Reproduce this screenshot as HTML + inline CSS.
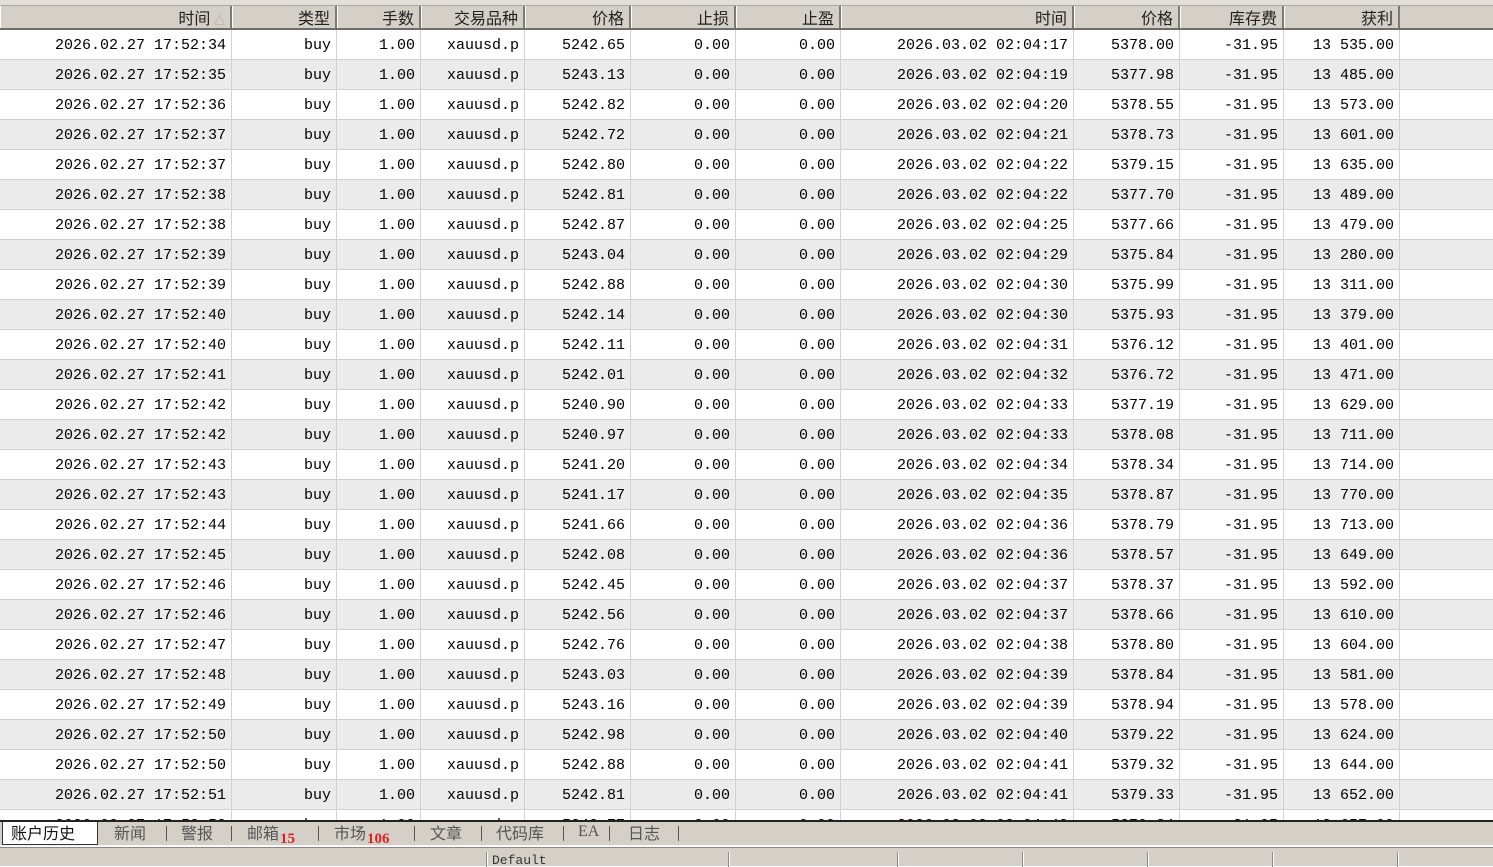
<!DOCTYPE html>
<html><head><meta charset="utf-8"><style>
*{margin:0;padding:0;box-sizing:border-box}
body{width:1493px;height:866px;overflow:hidden;background:#fff;font-family:"Liberation Mono","Noto Sans CJK SC",monospace;font-size:15px;color:#111;position:relative}
.top{position:absolute;left:0;top:0;width:1493px;height:6px;background:#e2dfd8;border-bottom:1px solid #a9a7a0}
.hd{position:absolute;left:0;top:6px;height:24px;width:1493px;background:#d4d0c8;border-bottom:2px solid #6e6c66}
.hd span{position:absolute;top:0;height:22px;line-height:23px;text-align:right;padding-right:5px;border-right:2px solid #7c7a75;font-family:"Noto Sans CJK SC",sans-serif;font-size:16px;color:#222}
.hd span:before{content:"";position:absolute;left:0;top:0;bottom:0;width:1px;background:#fff}
.rows{position:absolute;left:0;top:30px;width:1493px;height:790px;overflow:hidden}
.r{position:relative;height:30px;border-bottom:1px solid #cfcfcf}
.r:nth-child(even){background:#ebebeb}
.r span{position:absolute;top:0;height:30px;line-height:32px;text-align:right;padding-right:5px;border-right:1px solid #d2d2d2;white-space:pre;color:#000}
.c1{left:0;width:232px}.c2{left:232px;width:105px}.c3{left:337px;width:84px}.c4{left:421px;width:104px}.c5{left:525px;width:106px}.c6{left:631px;width:105px}.c7{left:736px;width:105px}.c8{left:841px;width:233px}.c9{left:1074px;width:106px}.c10{left:1180px;width:104px}.c11{left:1284px;width:116px}
.tabs{position:absolute;left:0;top:820px;width:1493px;height:26px;background:#d4d0c8;border-top:2px solid #222;border-bottom:1px solid #f4f4f4;font-family:"Noto Sans CJK SC",sans-serif;font-size:16px;color:#555}
.tabs .t{position:absolute;top:0;height:23px;line-height:20px}
.act{left:2px;width:96px;background:#fff;border:1px solid #333;border-top:none;color:#111;padding-left:8px}
.sep{position:absolute;top:4px;width:1px;height:15px;background:#555}
.red{color:#d22;font-family:"Liberation Serif",serif;font-weight:bold;font-size:15px;position:relative;top:4px;margin-left:1px}
.st{position:absolute;left:0;top:847px;width:1493px;height:19px;background:#d4d0c8;border-top:1px solid #8a8884}
.st i{position:absolute;top:4px;width:2px;height:15px;border-left:1px solid #8a8884;border-right:1px solid #fff}
</style></head><body>
<div class="top"></div>
<div class="hd">
<span class="c1">时间 <small style="color:#999;font-size:11px">△</small></span><span class="c2">类型</span><span class="c3">手数</span><span class="c4">交易品种</span><span class="c5">价格</span><span class="c6">止损</span><span class="c7">止盈</span><span class="c8">时间</span><span class="c9">价格</span><span class="c10">库存费</span><span class="c11">获利</span>
</div>
<div class="rows">
<div class="r"><span class="c1">2026.02.27 17:52:34</span><span class="c2">buy</span><span class="c3">1.00</span><span class="c4">xauusd.p</span><span class="c5">5242.65</span><span class="c6">0.00</span><span class="c7">0.00</span><span class="c8">2026.03.02 02:04:17</span><span class="c9">5378.00</span><span class="c10">-31.95</span><span class="c11">13 535.00</span></div>
<div class="r"><span class="c1">2026.02.27 17:52:35</span><span class="c2">buy</span><span class="c3">1.00</span><span class="c4">xauusd.p</span><span class="c5">5243.13</span><span class="c6">0.00</span><span class="c7">0.00</span><span class="c8">2026.03.02 02:04:19</span><span class="c9">5377.98</span><span class="c10">-31.95</span><span class="c11">13 485.00</span></div>
<div class="r"><span class="c1">2026.02.27 17:52:36</span><span class="c2">buy</span><span class="c3">1.00</span><span class="c4">xauusd.p</span><span class="c5">5242.82</span><span class="c6">0.00</span><span class="c7">0.00</span><span class="c8">2026.03.02 02:04:20</span><span class="c9">5378.55</span><span class="c10">-31.95</span><span class="c11">13 573.00</span></div>
<div class="r"><span class="c1">2026.02.27 17:52:37</span><span class="c2">buy</span><span class="c3">1.00</span><span class="c4">xauusd.p</span><span class="c5">5242.72</span><span class="c6">0.00</span><span class="c7">0.00</span><span class="c8">2026.03.02 02:04:21</span><span class="c9">5378.73</span><span class="c10">-31.95</span><span class="c11">13 601.00</span></div>
<div class="r"><span class="c1">2026.02.27 17:52:37</span><span class="c2">buy</span><span class="c3">1.00</span><span class="c4">xauusd.p</span><span class="c5">5242.80</span><span class="c6">0.00</span><span class="c7">0.00</span><span class="c8">2026.03.02 02:04:22</span><span class="c9">5379.15</span><span class="c10">-31.95</span><span class="c11">13 635.00</span></div>
<div class="r"><span class="c1">2026.02.27 17:52:38</span><span class="c2">buy</span><span class="c3">1.00</span><span class="c4">xauusd.p</span><span class="c5">5242.81</span><span class="c6">0.00</span><span class="c7">0.00</span><span class="c8">2026.03.02 02:04:22</span><span class="c9">5377.70</span><span class="c10">-31.95</span><span class="c11">13 489.00</span></div>
<div class="r"><span class="c1">2026.02.27 17:52:38</span><span class="c2">buy</span><span class="c3">1.00</span><span class="c4">xauusd.p</span><span class="c5">5242.87</span><span class="c6">0.00</span><span class="c7">0.00</span><span class="c8">2026.03.02 02:04:25</span><span class="c9">5377.66</span><span class="c10">-31.95</span><span class="c11">13 479.00</span></div>
<div class="r"><span class="c1">2026.02.27 17:52:39</span><span class="c2">buy</span><span class="c3">1.00</span><span class="c4">xauusd.p</span><span class="c5">5243.04</span><span class="c6">0.00</span><span class="c7">0.00</span><span class="c8">2026.03.02 02:04:29</span><span class="c9">5375.84</span><span class="c10">-31.95</span><span class="c11">13 280.00</span></div>
<div class="r"><span class="c1">2026.02.27 17:52:39</span><span class="c2">buy</span><span class="c3">1.00</span><span class="c4">xauusd.p</span><span class="c5">5242.88</span><span class="c6">0.00</span><span class="c7">0.00</span><span class="c8">2026.03.02 02:04:30</span><span class="c9">5375.99</span><span class="c10">-31.95</span><span class="c11">13 311.00</span></div>
<div class="r"><span class="c1">2026.02.27 17:52:40</span><span class="c2">buy</span><span class="c3">1.00</span><span class="c4">xauusd.p</span><span class="c5">5242.14</span><span class="c6">0.00</span><span class="c7">0.00</span><span class="c8">2026.03.02 02:04:30</span><span class="c9">5375.93</span><span class="c10">-31.95</span><span class="c11">13 379.00</span></div>
<div class="r"><span class="c1">2026.02.27 17:52:40</span><span class="c2">buy</span><span class="c3">1.00</span><span class="c4">xauusd.p</span><span class="c5">5242.11</span><span class="c6">0.00</span><span class="c7">0.00</span><span class="c8">2026.03.02 02:04:31</span><span class="c9">5376.12</span><span class="c10">-31.95</span><span class="c11">13 401.00</span></div>
<div class="r"><span class="c1">2026.02.27 17:52:41</span><span class="c2">buy</span><span class="c3">1.00</span><span class="c4">xauusd.p</span><span class="c5">5242.01</span><span class="c6">0.00</span><span class="c7">0.00</span><span class="c8">2026.03.02 02:04:32</span><span class="c9">5376.72</span><span class="c10">-31.95</span><span class="c11">13 471.00</span></div>
<div class="r"><span class="c1">2026.02.27 17:52:42</span><span class="c2">buy</span><span class="c3">1.00</span><span class="c4">xauusd.p</span><span class="c5">5240.90</span><span class="c6">0.00</span><span class="c7">0.00</span><span class="c8">2026.03.02 02:04:33</span><span class="c9">5377.19</span><span class="c10">-31.95</span><span class="c11">13 629.00</span></div>
<div class="r"><span class="c1">2026.02.27 17:52:42</span><span class="c2">buy</span><span class="c3">1.00</span><span class="c4">xauusd.p</span><span class="c5">5240.97</span><span class="c6">0.00</span><span class="c7">0.00</span><span class="c8">2026.03.02 02:04:33</span><span class="c9">5378.08</span><span class="c10">-31.95</span><span class="c11">13 711.00</span></div>
<div class="r"><span class="c1">2026.02.27 17:52:43</span><span class="c2">buy</span><span class="c3">1.00</span><span class="c4">xauusd.p</span><span class="c5">5241.20</span><span class="c6">0.00</span><span class="c7">0.00</span><span class="c8">2026.03.02 02:04:34</span><span class="c9">5378.34</span><span class="c10">-31.95</span><span class="c11">13 714.00</span></div>
<div class="r"><span class="c1">2026.02.27 17:52:43</span><span class="c2">buy</span><span class="c3">1.00</span><span class="c4">xauusd.p</span><span class="c5">5241.17</span><span class="c6">0.00</span><span class="c7">0.00</span><span class="c8">2026.03.02 02:04:35</span><span class="c9">5378.87</span><span class="c10">-31.95</span><span class="c11">13 770.00</span></div>
<div class="r"><span class="c1">2026.02.27 17:52:44</span><span class="c2">buy</span><span class="c3">1.00</span><span class="c4">xauusd.p</span><span class="c5">5241.66</span><span class="c6">0.00</span><span class="c7">0.00</span><span class="c8">2026.03.02 02:04:36</span><span class="c9">5378.79</span><span class="c10">-31.95</span><span class="c11">13 713.00</span></div>
<div class="r"><span class="c1">2026.02.27 17:52:45</span><span class="c2">buy</span><span class="c3">1.00</span><span class="c4">xauusd.p</span><span class="c5">5242.08</span><span class="c6">0.00</span><span class="c7">0.00</span><span class="c8">2026.03.02 02:04:36</span><span class="c9">5378.57</span><span class="c10">-31.95</span><span class="c11">13 649.00</span></div>
<div class="r"><span class="c1">2026.02.27 17:52:46</span><span class="c2">buy</span><span class="c3">1.00</span><span class="c4">xauusd.p</span><span class="c5">5242.45</span><span class="c6">0.00</span><span class="c7">0.00</span><span class="c8">2026.03.02 02:04:37</span><span class="c9">5378.37</span><span class="c10">-31.95</span><span class="c11">13 592.00</span></div>
<div class="r"><span class="c1">2026.02.27 17:52:46</span><span class="c2">buy</span><span class="c3">1.00</span><span class="c4">xauusd.p</span><span class="c5">5242.56</span><span class="c6">0.00</span><span class="c7">0.00</span><span class="c8">2026.03.02 02:04:37</span><span class="c9">5378.66</span><span class="c10">-31.95</span><span class="c11">13 610.00</span></div>
<div class="r"><span class="c1">2026.02.27 17:52:47</span><span class="c2">buy</span><span class="c3">1.00</span><span class="c4">xauusd.p</span><span class="c5">5242.76</span><span class="c6">0.00</span><span class="c7">0.00</span><span class="c8">2026.03.02 02:04:38</span><span class="c9">5378.80</span><span class="c10">-31.95</span><span class="c11">13 604.00</span></div>
<div class="r"><span class="c1">2026.02.27 17:52:48</span><span class="c2">buy</span><span class="c3">1.00</span><span class="c4">xauusd.p</span><span class="c5">5243.03</span><span class="c6">0.00</span><span class="c7">0.00</span><span class="c8">2026.03.02 02:04:39</span><span class="c9">5378.84</span><span class="c10">-31.95</span><span class="c11">13 581.00</span></div>
<div class="r"><span class="c1">2026.02.27 17:52:49</span><span class="c2">buy</span><span class="c3">1.00</span><span class="c4">xauusd.p</span><span class="c5">5243.16</span><span class="c6">0.00</span><span class="c7">0.00</span><span class="c8">2026.03.02 02:04:39</span><span class="c9">5378.94</span><span class="c10">-31.95</span><span class="c11">13 578.00</span></div>
<div class="r"><span class="c1">2026.02.27 17:52:50</span><span class="c2">buy</span><span class="c3">1.00</span><span class="c4">xauusd.p</span><span class="c5">5242.98</span><span class="c6">0.00</span><span class="c7">0.00</span><span class="c8">2026.03.02 02:04:40</span><span class="c9">5379.22</span><span class="c10">-31.95</span><span class="c11">13 624.00</span></div>
<div class="r"><span class="c1">2026.02.27 17:52:50</span><span class="c2">buy</span><span class="c3">1.00</span><span class="c4">xauusd.p</span><span class="c5">5242.88</span><span class="c6">0.00</span><span class="c7">0.00</span><span class="c8">2026.03.02 02:04:41</span><span class="c9">5379.32</span><span class="c10">-31.95</span><span class="c11">13 644.00</span></div>
<div class="r"><span class="c1">2026.02.27 17:52:51</span><span class="c2">buy</span><span class="c3">1.00</span><span class="c4">xauusd.p</span><span class="c5">5242.81</span><span class="c6">0.00</span><span class="c7">0.00</span><span class="c8">2026.03.02 02:04:41</span><span class="c9">5379.33</span><span class="c10">-31.95</span><span class="c11">13 652.00</span></div>
<div class="r"><span class="c1">2026.02.27 17:52:52</span><span class="c2">buy</span><span class="c3">1.00</span><span class="c4">xauusd.p</span><span class="c5">5242.77</span><span class="c6">0.00</span><span class="c7">0.00</span><span class="c8">2026.03.02 02:04:42</span><span class="c9">5379.34</span><span class="c10">-31.95</span><span class="c11">13 657.00</span></div>
</div>
<div class="tabs">
<div class="t act">账户历史</div>
<div class="t" style="left:114px">新闻</div><div class="sep" style="left:166px"></div>
<div class="t" style="left:181px">警报</div><div class="sep" style="left:231px"></div>
<div class="t" style="left:247px">邮箱<span class="red">15</span></div><div class="sep" style="left:318px"></div>
<div class="t" style="left:334px">市场<span class="red">106</span></div><div class="sep" style="left:414px"></div>
<div class="t" style="left:430px">文章</div><div class="sep" style="left:481px"></div>
<div class="t" style="left:496px">代码库</div><div class="sep" style="left:563px"></div>
<div class="t" style="left:578px;font-family:'Liberation Serif',serif">EA</div><div class="sep" style="left:609px"></div>
<div class="t" style="left:628px">日志</div><div class="sep" style="left:678px"></div>
</div>
<div class="st"><i style="left:486px"></i><span style="position:absolute;left:492px;top:6px;font-size:13px;color:#333;line-height:13px;height:12px;overflow:hidden">Default</span><i style="left:728px"></i><i style="left:897px"></i><i style="left:1022px"></i><i style="left:1147px"></i><i style="left:1272px"></i><i style="left:1397px"></i></div>
</body></html>
